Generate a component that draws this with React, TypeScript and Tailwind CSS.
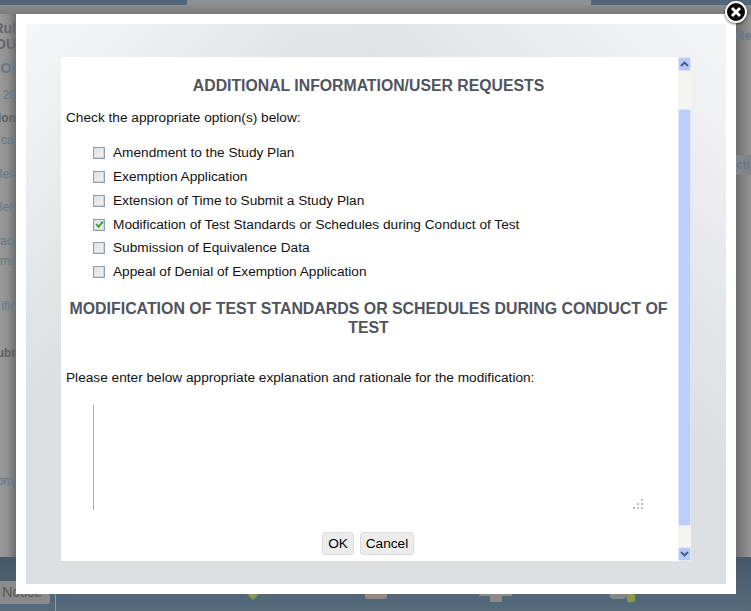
const options = [
  { label: "Amendment to the Study Plan", checked: false, h: "h-[24px]" },
  { label: "Exemption Application", checked: false, h: "h-[24px]" },
  { label: "Extension of Time to Submit a Study Plan", checked: false, h: "h-[24px]" },
  { label: "Modification of Test Standards or Schedules during Conduct of Test", checked: true, h: "h-[23px]" },
  { label: "Submission of Equivalence Data", checked: false, h: "h-[24px]" },
  { label: "Appeal of Denial of Exemption Application", checked: false, h: "h-[24px]" },
];

const sideLabels = [
  { t: "Rul", c: "h-4 mt-[6px] text-[14px] font-bold text-[#63666a]" },
  { t: "OU", c: "h-4 text-[14px] font-bold text-[#63666a]" },
  { t: "Of", c: "h-4 mt-[8px] text-[14px] font-bold text-[#647688]" },
  { t: "20", c: "h-4 mt-[11px] text-[#647688]" },
  { t: "ion", c: "h-4 mt-[7px] font-bold text-[#5c5e61]" },
  { t: "cal", c: "h-4 mt-[6px] text-[#647688]" },
  { t: "Beh", c: "h-4 mt-[18px] text-[#647688]" },
  { t: "Beh", c: "h-4 mt-[17px] text-[#647688]" },
  { t: "act", c: "h-4 mt-[18px] text-[#647688]" },
  { t: "ms", c: "h-4 mt-[4px] text-[#647688]" },
  { t: "ific", c: "h-4 mt-[29px] text-[#647688]" },
  { t: "ubr", c: "h-4 mt-[31px] font-bold text-[#5c5e61]" },
  { t: "omi", c: "h-4 mt-[112px] text-[#647688]" },
];

function Checkbox({ checked }: { checked: boolean }) {
  return (
    <span className="flex h-[12px] w-[12px] shrink-0 items-center justify-center border border-[#86a0be] bg-gradient-to-br from-[#dfe0dc] to-[#f6f6f4] shadow-[inset_-1px_-1px_0_#c9d4e0]">
      {checked && (
        <svg width="9" height="9" viewBox="0 0 9 9" fill="none">
          <path d="M1.2 4.2 L3.6 6.8 L7.8 1.6" stroke="#28a428" strokeWidth="1.8" />
        </svg>
      )}
    </span>
  );
}

function Chevron({ up }: { up: boolean }) {
  return (
    <svg width="9" height="6" viewBox="0 0 9 6" fill="none">
      <path d={up ? "M1 5 L4.5 1.5 L8 5" : "M1 1 L4.5 4.5 L8 1"} stroke="#3f5a8c" strokeWidth="1.8" />
    </svg>
  );
}

function ScrollBtn({ up }: { up: boolean }) {
  return (
    <div className="flex h-[14px] w-[13px] items-center justify-center rounded-[2px] border border-[#dfe6f7] bg-[#b6c9f7]">
      <Chevron up={up} />
    </div>
  );
}

export default function App() {
  return (
    <div className="relative h-[611px] w-[751px] overflow-hidden bg-[#8e8e8e] font-['Liberation_Sans',Arial,sans-serif]">
      <div className="flex h-full flex-col">
        <div className="flex h-[5px] bg-[#8d9095]">
          <div className="h-full w-[187px] bg-[#53677a]" />
          <div className="flex-1" />
          <div className="h-full w-[160px] bg-[#53677a]" />
        </div>
        <div className="h-[9px] bg-gradient-to-b from-[#8c8c8c] to-[#7b7b7b]" />
        <div className="flex h-[543px] bg-[#8a8a8a]">
          <div className="flex h-full w-[16px] flex-col items-end overflow-hidden bg-gradient-to-r from-[#999999] via-[#8f8f8f] to-[#6e6e6e] text-[12px] leading-4">
            {sideLabels.map((s, i) => (
              <div key={i} className={`whitespace-nowrap ${s.c}`}>{s.t}</div>
            ))}
          </div>
          <div className="flex-1" />
          <div className="flex h-full w-[15px] flex-col overflow-hidden bg-gradient-to-r from-[#6e6e6e] to-[#959595] text-[12px] font-bold leading-4 text-[#647688]">
            <div className="mt-[14px] h-4 whitespace-nowrap">Rec</div>
            <div className="mt-[111px] flex h-[20px] items-center whitespace-nowrap bg-[#828587]">cti</div>
          </div>
        </div>
        <div className="relative flex h-[54px] bg-gradient-to-b from-[#46596a] to-[#566b7e]">
          <div className="mt-[24px] flex h-[23px] w-[50px] items-center justify-end rounded-r-[3px] bg-[#8b8b8b] pr-[8px] text-[14px] text-[#555555]">
            <span className="whitespace-nowrap">y Notice</span>
          </div>
          <div className="ml-[5px] mt-[37px] h-[17px] w-px bg-[#8d9aa6]" />
          <div className="ml-[191px] mt-[37px] h-0 w-0 border-x-[6px] border-t-[6px] border-x-transparent border-t-[#8a9a4a]" />
          <div className="ml-[106px] mt-[37px] h-[5px] w-[22px] rounded-b-[2px] bg-[#94877f]" />
          <div className="ml-[92px] mt-[37px] flex flex-col items-center">
            <div className="h-[2px] w-[33px] bg-[#8c8c86]" />
            <div className="h-[6px] w-[12px] bg-[#8c8c86]" />
          </div>
          <div className="ml-[97px] mt-[37px] h-[5px] w-[18px] rounded-b-[5px] bg-[#868a84]" />
          <div className="mt-[37px] h-[8px] w-[8px] rounded-b-[2px] bg-[#8a9a4a]" />
        </div>
      </div>

      {/* Modal */}
      <div className="absolute left-[16px] top-[14px] h-[580px] w-[720px] bg-white p-[10px]">
        <div className="h-[560px] w-[700px] bg-[linear-gradient(135deg,#f5f6f8,transparent_30%),linear-gradient(225deg,#f4f5f7,#dce0e3_35%)] pl-[35px] pt-[33px]">
          <div className="flex h-[504px] w-[630px]">
            <div className="flex w-[617px] flex-col bg-white pl-[5px] text-[13.67px] leading-4 text-[#111]">
              <h1 className="mt-[21px] pr-[7px] text-center text-[15.8px] leading-[16px] font-bold text-[#50545f]">
                ADDITIONAL INFORMATION/USER REQUESTS
              </h1>
              <p className="mt-[16px]">Check the appropriate option(s) below:</p>
              <ul className="mt-[15px] flex flex-col pl-[27px]">
                {options.map((o) => (
                  <li key={o.label} className={`flex items-center gap-[8px] ${o.h}`}>
                    <Checkbox checked={o.checked} />
                    <span className="whitespace-nowrap">{o.label}</span>
                  </li>
                ))}
              </ul>
              <h2 className="mt-[15px] pr-[7px] text-center text-[15.9px] leading-[19px] font-bold text-[#50545f]">
                MODIFICATION OF TEST STANDARDS OR SCHEDULES DURING CONDUCT OF TEST
              </h2>
              <p className="mt-[33px]">Please enter below appropriate explanation and rationale for the modification:</p>
              <div className="relative ml-[27px] mt-[19px] h-[105px] w-[551px] border-l border-[#aaaaaa]">
                <svg className="absolute bottom-0 right-0" width="12" height="12" viewBox="0 0 12 12" fill="#bbbbbb">
                  <rect x="9" y="1" width="2" height="2" />
                  <rect x="5" y="5" width="2" height="2" />
                  <rect x="9" y="5" width="2" height="2" />
                  <rect x="1" y="9" width="2" height="2" />
                  <rect x="5" y="9" width="2" height="2" />
                  <rect x="9" y="9" width="2" height="2" />
                </svg>
              </div>
              <div className="mt-[22px] flex justify-center gap-[6px] pr-[8px]">
                <button className="h-[23px] w-[32px] rounded-[3px] border border-[#dcdcdc] bg-[#ececec] text-[13.67px] text-black">OK</button>
                <button className="h-[23px] w-[54px] rounded-[3px] border border-[#dcdcdc] bg-[#ececec] text-[13.67px] text-black">Cancel</button>
              </div>
            </div>
            <div className="flex w-[13px] flex-col items-center bg-[#f5f4f0]">
              <ScrollBtn up />
              <div className="mt-[38px] h-[417px] w-[13px] rounded-[2px] border border-[#dfe6f7] bg-[#bccffc]" />
              <div className="flex-1" />
              <ScrollBtn up={false} />
            </div>
          </div>
        </div>
      </div>

      {/* Close */}
      <button className="absolute left-[725px] top-[1px] flex h-[22px] w-[22px] items-center justify-center rounded-full border-2 border-white bg-black shadow-[0_1px_3px_rgba(0,0,0,0.6)]">
        <svg width="12" height="12" viewBox="0 0 12 12" fill="none">
          <path d="M2 2 L10 10 M10 2 L2 10" stroke="white" strokeWidth="3" />
        </svg>
      </button>
    </div>
  );
}
